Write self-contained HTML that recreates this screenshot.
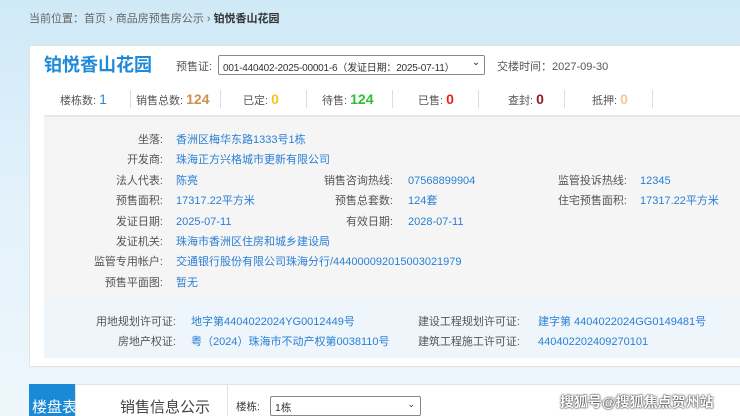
<!DOCTYPE html>
<html><head><meta charset="utf-8"><style>
*{margin:0;padding:0;box-sizing:border-box}
html,body{width:740px;height:416px;overflow:hidden}
body{font-family:"Liberation Sans","Noto Sans CJK SC",sans-serif;font-size:11px;color:#555;background:linear-gradient(180deg,#cfe9f7 0%,#e3f2fb 50%,#eef6fb 100%);position:relative}
.a{position:absolute;white-space:nowrap}
.blue{color:#2a7fd4}
.lab{text-align:right;color:#555}
</style></head><body>
<div class="a" style="left:29px;top:10px;color:#666">当前位置：首页 › 商品房预售房公示 › <b style="color:#333">铂悦香山花园</b></div>
<div class="a" style="left:29px;top:45px;width:720px;height:322px;background:#fff;border:1px solid #e3e3e3"></div>
<div class="a" style="left:44px;top:51px;font-size:18px;font-weight:bold;color:#1e8ad8">铂悦香山花园</div>
<div class="a" style="left:176px;top:58px;color:#555">预售证:</div>
<div class="a" style="left:218px;top:55px;width:267px;height:20px;border:1px solid #888;border-radius:2px;padding:3px 4px;color:#333;font-size:10px;letter-spacing:-0.2px">001-440402-2025-00001-6（发证日期：2025-07-11）<span style="position:absolute;right:4px;top:1px;font-size:10px;background:#fff">&#8964;</span></div>
<div class="a" style="left:497px;top:58px">交楼时间：2027-09-30</div>
<div class="a" style="left:60px;top:91px;font-size:11px">楼栋数: <b style="color:#2a8ad8;font-size:14px;font-weight:normal">1</b></div>
<div class="a" style="left:130px;top:90px;width:1px;height:18px;background:#ddd"></div>
<div class="a" style="left:136px;top:91px">销售总数: <b style="color:#d08f4a;font-size:14px">124</b></div>
<div class="a" style="left:220px;top:90px;width:1px;height:18px;background:#ddd"></div>
<div class="a" style="left:243px;top:91px">已定: <b style="color:#f5c518;font-size:14px">0</b></div>
<div class="a" style="left:306px;top:90px;width:1px;height:18px;background:#ddd"></div>
<div class="a" style="left:322px;top:91px">待售: <b style="color:#2cc033;font-size:14px">124</b></div>
<div class="a" style="left:392px;top:90px;width:1px;height:18px;background:#ddd"></div>
<div class="a" style="left:418px;top:91px">已售: <b style="color:#e8211d;font-size:14px">0</b></div>
<div class="a" style="left:478px;top:90px;width:1px;height:18px;background:#ddd"></div>
<div class="a" style="left:508px;top:91px">查封: <b style="color:#8b1a1a;font-size:14px">0</b></div>
<div class="a" style="left:564px;top:90px;width:1px;height:18px;background:#ddd"></div>
<div class="a" style="left:592px;top:91px">抵押: <b style="color:#f6c88e;font-size:14px">0</b></div>
<div class="a" style="left:652px;top:90px;width:1px;height:18px;background:#ddd"></div>
<div class="a" style="left:44px;top:115px;width:700px;height:183px;background:#f5f5f5;border-top:2px solid #e8e8e8"></div>
<div class="a" style="left:44px;top:298px;width:700px;height:60px;background:#eef6fc"></div>
<div class="a lab" style="left:60px;top:130px;width:103px;line-height:20.4px">坐落:<br>开发商:<br>法人代表:<br>预售面积:<br>发证日期:<br>发证机关:<br>监管专用帐户:<br>预售平面图:</div>
<div class="a blue" style="left:176px;top:130px;line-height:20.4px">香洲区梅华东路1333号1栋<br>珠海正方兴格城市更新有限公司<br>陈亮<br>17317.22平方米<br>2025-07-11<br>珠海市香洲区住房和城乡建设局<br>交通银行股份有限公司珠海分行/444000092015003021979<br>暂无</div>
<div class="a lab" style="left:290px;top:171px;width:103px;line-height:20.4px">销售咨询热线:<br>预售总套数:<br>有效日期:</div>
<div class="a blue" style="left:408px;top:171px;line-height:20.4px">07568899904<br>124套<br>2028-07-11</div>
<div class="a lab" style="left:520px;top:171px;width:107px;line-height:20.4px">监管投诉热线:<br>住宅预售面积:</div>
<div class="a blue" style="left:640px;top:171px;line-height:20.4px">12345<br>17317.22平方米</div>
<div class="a lab" style="left:60px;top:312px;width:116px;line-height:20px">用地规划许可证:<br>房地产权证:</div>
<div class="a blue" style="left:191px;top:312px;line-height:20px">地字第4404022024YG0012449号<br>粤（2024）珠海市不动产权第0038110号</div>
<div class="a lab" style="left:400px;top:312px;width:120px;line-height:20px">建设工程规划许可证:<br>建筑工程施工许可证:</div>
<div class="a blue" style="left:538px;top:312px;line-height:20px">建字第 4404022024GG0149481号<br>440402202409270101</div>
<div class="a" style="left:29px;top:384px;width:720px;height:32px;background:#fff;border-top:1px solid #e3e3e3"></div>
<div class="a" style="left:29px;top:384px;width:46px;height:32px;background:#1a8ad6;color:#fff;font-size:15px;padding:12px 0 0 3px;text-align:center">楼盘表</div>
<div class="a" style="left:75px;top:384px;width:1px;height:32px;background:#e3e3e3"></div>
<div class="a" style="left:120px;top:396px;font-size:15px;color:#444">销售信息公示</div>
<div class="a" style="left:227px;top:384px;width:1px;height:32px;background:#e3e3e3"></div>
<div class="a" style="left:236px;top:399px;font-size:10.5px;color:#333">楼栋:</div>
<div class="a" style="left:270px;top:396px;width:151px;height:20px;border:1px solid #888;border-radius:2px;padding:3px 4px;font-size:10.5px;color:#333">1栋<span style="position:absolute;right:5px;top:2px;font-size:9px">&#8964;</span></div>
<div class="a" style="left:560px;top:392px;font-size:14px;font-weight:bold;color:#fff;text-shadow:0 0 2px #333,0 0 1px #000">搜狐号@搜狐焦点贺州站</div>
</body></html>
